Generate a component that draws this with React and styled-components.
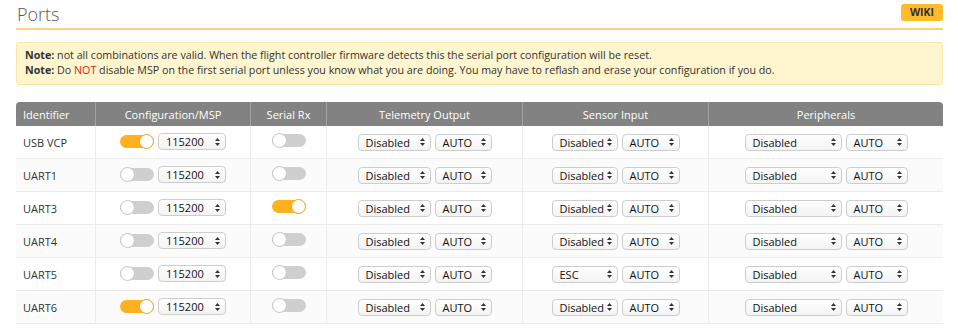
import React from 'react';
import styled, { createGlobalStyle } from 'styled-components';

const GlobalStyle = createGlobalStyle`
  body {
    margin: 0;
    background: #ffffff;
    font-family: "Open Sans", "Liberation Sans", sans-serif;
  }
`;

const Page = styled.div`
  padding: 0 15px 0 16px;
  width: 958px;
  box-sizing: border-box;
`;

const TitleBar = styled.div`
  display: flex;
  align-items: center;
  justify-content: space-between;
  height: 28px;
  border-bottom: 2px solid #f8d27e;
`;

const Title = styled.h1`
  margin: 0 0 0 1px;
  font-size: 18px;
  font-weight: 300;
  color: #575757;
  line-height: 24px;
`;

const WikiButton = styled.span`
  background: #ffbb2a;
  color: #303030;
  font-size: 10.5px;
  font-weight: 700;
  border-radius: 3px;
  padding: 2px 9px;
  line-height: 13px;
  margin-bottom: 4px;
`;

const Note = styled.div`
  margin-top: 12px;
  background: #fff5ce;
  border: 1px solid #fbe8a6;
  border-radius: 3px;
  padding: 5px 8px 6px 8px;
  font-size: 10.7px;
  line-height: 15px;
  color: #333;
`;

const Strong = styled.b`
  font-weight: 700;
`;

const Warn = styled.span`
  color: #e02020;
`;

const Table = styled.table`
  margin-top: 17px;
  width: 100%;
  table-layout: fixed;
  border-collapse: separate;
  border-spacing: 0;
  font-size: 11px;
  color: #333;
`;

const Th = styled.th`
  box-sizing: border-box;
  background: #828282;
  color: #ffffff;
  font-weight: 400;
  height: 24px;
  padding: 0 7px;
  text-align: ${p => (p.left ? 'left' : 'center')};
  width: ${p => (p.w ? `${p.w}px` : 'auto')};
  border-left: ${p => (p.first ? 'none' : '1px solid #a3a3a3')};
  &:first-child { border-top-left-radius: 4px; }
  &:last-child { border-top-right-radius: 4px; }
`;

const Tr = styled.tr`
  background: ${p => (p.odd ? '#fbfbfb' : '#ffffff')};
`;

const Td = styled.td`
  height: 32px;
  padding: 0;
  border-bottom: 1px solid #ebebeb;
  border-left: ${p => (p.first ? 'none' : '1px solid #ededed')};
  text-align: ${p => (p.left ? 'left' : 'center')};
  padding-left: ${p => (p.left ? '7px' : '0')};
  white-space: nowrap;
`;

const Cell = styled.div`
  display: inline-flex;
  align-items: center;
  gap: 4px;
`;

const Track = styled.span`
  position: relative;
  display: inline-block;
  width: 34px;
  height: 13px;
  border-radius: 7px;
  background: ${p => (p.on ? '#ffb11f' : '#cfcfcf')};
`;

const Knob = styled.span`
  position: absolute;
  top: -1px;
  left: ${p => (p.on ? '19px' : '0')};
  width: 15px;
  height: 15px;
  box-sizing: border-box;
  border-radius: 50%;
  background: #ffffff;
  border: 1px solid ${p => (p.on ? '#e9a326' : '#c4c4c4')};
`;

const SelectBox = styled.span`
  display: inline-flex;
  align-items: center;
  justify-content: space-between;
  box-sizing: border-box;
  width: ${p => p.w}px;
  height: 17px;
  padding: 0 5px 0 7px;
  border: 1px solid #cdcdcd;
  border-radius: 4px;
  background: linear-gradient(#ffffff, #f3f3f3);
  color: #111111;
  font-size: 11px;
  text-align: left;
`;

const Arrows = () => (
  <svg width="5" height="8" viewBox="0 0 5 8">
    <path d="M2.5 0 L5 3 L0 3 Z" fill="#333" />
    <path d="M2.5 8 L5 5 L0 5 Z" fill="#333" />
  </svg>
);

const Toggle = ({ on }) => (
  <Track on={on ? 1 : 0}>
    <Knob on={on ? 1 : 0} />
  </Track>
);

const Select = ({ w, children }) => (
  <SelectBox w={w}>
    <span>{children}</span>
    <Arrows />
  </SelectBox>
);

const ports = [
  { id: 'USB VCP', msp: true, rx: false, sensor: 'Disabled' },
  { id: 'UART1', msp: false, rx: false, sensor: 'Disabled' },
  { id: 'UART3', msp: false, rx: true, sensor: 'Disabled' },
  { id: 'UART4', msp: false, rx: false, sensor: 'Disabled' },
  { id: 'UART5', msp: false, rx: false, sensor: 'ESC' },
  { id: 'UART6', msp: true, rx: false, sensor: 'Disabled' },
];

export default function App() {
  return (
    <Page>
      <GlobalStyle />
      <TitleBar>
        <Title>Ports</Title>
        <WikiButton>WIKI</WikiButton>
      </TitleBar>
      <Note>
        <div><Strong>Note:</Strong> not all combinations are valid. When the flight controller firmware detects this the serial port configuration will be reset.</div>
        <div><Strong>Note:</Strong> Do <Warn>NOT</Warn> disable MSP on the first serial port unless you know what you are doing. You may have to reflash and erase your configuration if you do.</div>
      </Note>
      <Table>
        <thead>
          <tr>
            <Th left first w={79}>Identifier</Th>
            <Th w={155}>Configuration/MSP</Th>
            <Th w={76}>Serial Rx</Th>
            <Th w={196}>Telemetry Output</Th>
            <Th w={186}>Sensor Input</Th>
            <Th>Peripherals</Th>
          </tr>
        </thead>
        <tbody>
          {ports.map((p, i) => (
            <Tr key={p.id} odd={i % 2}>
              <Td left first>{p.id}</Td>
              <Td>
                <Cell>
                  <Toggle on={p.msp} />
                  <Select w={68}>115200</Select>
                </Cell>
              </Td>
              <Td>
                <Toggle on={p.rx} />
              </Td>
              <Td>
                <Cell>
                  <Select w={73}>Disabled</Select>
                  <Select w={57}>AUTO</Select>
                </Cell>
              </Td>
              <Td>
                <Cell>
                  <Select w={66}>{p.sensor}</Select>
                  <Select w={58}>AUTO</Select>
                </Cell>
              </Td>
              <Td>
                <Cell>
                  <Select w={97}>Disabled</Select>
                  <Select w={62}>AUTO</Select>
                </Cell>
              </Td>
            </Tr>
          ))}
        </tbody>
      </Table>
    </Page>
  );
}
